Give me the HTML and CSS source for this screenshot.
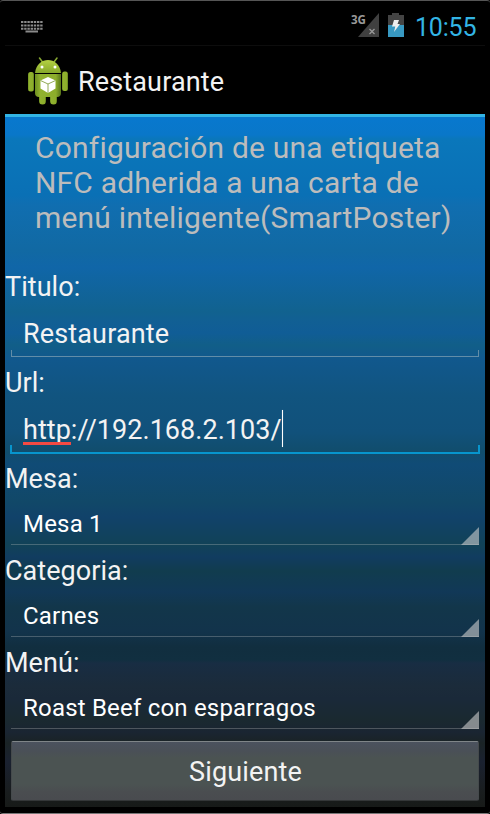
FILE: index.html
```html
<!DOCTYPE html>
<html lang="es">
<head>
<meta charset="utf-8">
<title>Restaurante</title>
<link rel="stylesheet" href="styles.css">
</head>
<body>
<div class="device">
  <header class="status">
    <svg class="keyboard" width="22" height="12" viewBox="0 0 22 12" fill="none" stroke="#8a8a8a" stroke-width="2">
      <path d="M0 1H22M0 4.5H22M0 7.8H22" stroke-dasharray="2.4 .8"/>
      <path d="M4.5 10.5H17"/>
    </svg>
    <svg class="signal" width="28" height="27" viewBox="0 0 28 27">
      <path d="M28 2V26H7Z" fill="#404040"/>
      <path d="M18.5 18L23.5 23M23.5 18L18.5 23" stroke="#999" stroke-width="1.3"/>
      <text class="network" x="0" y="13" textLength="15" lengthAdjust="spacingAndGlyphs">3G</text>
    </svg>
    <svg class="battery" width="16" height="24" viewBox="0 0 16 24">
      <path d="M0 2H4V0H11V2H16V12H0Z" fill="#444"/>
      <path d="M0 12H16V24H0Z" fill="#3899c2"/>
      <path d="M6 7H11L9.5 11H12L6 19L7.3 13.4H4Z" fill="#eee"/>
    </svg>
    <span class="clock">10:55</span>
  </header>
  <div class="actionbar">
    <svg class="robot" width="40" height="48" viewBox="0 0 40 48">
      <defs>
        <linearGradient id="body" x1="0" x2="1" y1="0" y2="0">
          <stop offset="0" stop-color="#6d8e20"/><stop offset=".2" stop-color="#91b22f"/><stop offset=".8" stop-color="#8cad2b"/><stop offset="1" stop-color="#58751a"/>
        </linearGradient>
        <linearGradient id="head" x1="0" x2="0" y1="0" y2="1">
          <stop offset="0" stop-color="#b5d143"/><stop offset="1" stop-color="#86a82a"/>
        </linearGradient>
      </defs>
      <path d="M11.5 1L14.5 5M29 1L26 5" stroke="#87a832" stroke-width="1.5" stroke-linecap="round"/>
      <path d="M7 16C8 7 14 3 20 3S32 7 33 16Z" fill="url(#head)"/>
      <circle cx="14" cy="10" r="1.5" fill="#fff"/><circle cx="27" cy="10" r="1.5" fill="#fff"/>
      <rect x="11" y="34" width="7" height="13.5" rx="3.5" fill="url(#body)"/>
      <rect x="22" y="34" width="7" height="13.5" rx="3.5" fill="url(#body)"/>
      <rect x="0" y="15" width="6" height="19.5" rx="2.5" fill="url(#body)"/>
      <rect x="34" y="14.5" width="6" height="19.5" rx="2.5" fill="url(#body)"/>
      <path d="M7 17H33V36Q33 40 29 40H11Q7 40 7 36Z" fill="url(#body)"/>
      <path d="M20 20L27.5 23.5V31.5L20 36L12.5 31.5V23.5Z" fill="#fff"/>
      <path d="M12.5 23.5L20 27L27.5 23.5M20 27V36" fill="none" stroke="#91aa56" stroke-width="1"/>
    </svg>
    <h1 class="title">Restaurante</h1>
  </div>
  <main class="content">
    <p class="intro"><span class="line">Configuración de una etiqueta</span><span class="line">NFC adherida a una carta de</span><span class="line">menú inteligente(SmartPoster)</span></p>
    <div class="label">Titulo:</div>
    <div class="edit"><span class="value">Restaurante</span></div>
    <div class="label">Url:</div>
    <div class="edit focused"><span class="value url"><span class="misspelled">http</span>://192.168.2.103/</span><span class="caret"></span></div>
    <div class="label">Mesa:</div>
    <div class="spinner"><span>Mesa 1</span></div>
    <div class="label">Categoria:</div>
    <div class="spinner"><span>Carnes</span></div>
    <div class="label">Menú:</div>
    <div class="spinner"><span>Roast Beef con esparragos</span></div>
    <button class="next">Siguiente</button>
  </main>
</div>
</body>
</html>
```
FILE: styles.css
```css
* { box-sizing: border-box; }
body { margin: 0; background: #000; font-family: Roboto, sans-serif; color: #f3f3f3; }
.device { height: 814px; padding: 0 5px; border-top: 1px solid #555; border-bottom: 1px solid #777; border-radius: 3px; overflow: hidden; }
.status { height: 45px; display: flex; align-items: flex-start; border-bottom: 1px solid #0d0d0d; }
.keyboard { margin: 20px 0 0 16px; }
.signal { margin: 10px 0 0 auto; }
.network { font: bold 13px "Open Sans", sans-serif; fill: #999; }
.battery { margin: 12px 0 0 9px; }
.clock { width: 61px; margin: 11px 9px 0 11px; font-size: 25px; line-height: 31px; letter-spacing: -.2px; color: #33b5e5; white-space: nowrap; }
.actionbar { height: 71px; display: flex; align-items: flex-start; border-bottom: 3px solid #33b5e5; }
.robot { margin: 11px 0 0 23px; }
.title { margin: 20px 0 0 10px; font-size: 27px; line-height: 32px; font-weight: 400; letter-spacing: .14px; }
.content {
  height: 690px;
  background: linear-gradient(#0878ce 0, #0977c9 18px, #0a77bb 22px, #0a70b5 78px, #106eb0 88px, #1169a3 133px, #1066a8 150px, #11628f 195px, #115f94 205px, #105d96 216px, #115e88 228px, #11588d 242px, #11547f 280px, #11517b 315px, #114d6c 335px, #104b76 347px, #114868 385px, #11426a 400px, #114257 428px, #113c60 440px, #113c4e 454px, #113857 475px, #12364a 490px, #12334b 515px, #112e3f 530px, #112f40 543px, #182d43 546px, #1b2b3a 570px, #1a2939 582px, #1a2930 603px, #1a2532 615px, #1a2325 626px, #1a2130 645px, #191d1e 675px, #171a18 690px);
}
.intro { height: 154px; margin: 0; padding: 13px 0 0 30px; font-size: 30px; line-height: 35px; color: #bcbcbc; white-space: nowrap; }
.line { display: block; letter-spacing: .19px; }
.label { height: 32px; font-size: 27px; line-height: 32px; letter-spacing: .05px; }
.edit { position: relative; height: 64px; padding: 15px 0 0 18px; display: flex; align-items: flex-start; font-size: 27px; line-height: 32px; }
.edit::after { content: ""; position: absolute; left: 6px; right: 6px; bottom: 10px; height: 6px; border: 1px solid #628da8; border-top: 0; }
.focused::after { left: 5px; right: 5px; bottom: 9px; height: 7px; border: 2px solid #0795cd; border-top: 0; }
.value { letter-spacing: .14px; }
.url { letter-spacing: .04px; }
.misspelled { position: relative; }
.misspelled::before { content: ""; position: absolute; left: 0; right: 0; top: 28px; height: 3px; background: #f44a43; }
.caret { width: 1px; height: 37px; margin-top: -4px; background: #fff; box-shadow: 0 0 1px #fff8; }
.spinner { position: relative; height: 60px; padding: 14px 0 0 18px; font-size: 24px; line-height: 30px; color: #fff; letter-spacing: .2px; }
.spinner::before { content: ""; position: absolute; left: 6px; right: 6px; bottom: 10px; height: 1px; background: rgba(200, 200, 200, .3); }
.spinner::after { content: ""; position: absolute; right: 6px; bottom: 10px; width: 18px; height: 18px; background: rgba(205, 205, 205, .6); clip-path: polygon(100% 0, 100% 100%, 0 100%); }
.next { display: block; width: 468px; height: 60px; margin: 2px 6px 0; padding: 2px 0 0 1px; border: 1px solid #454a4c; border-top-color: #7f8588; border-bottom-color: #343738; border-radius: 2px; background: linear-gradient(#4b525e 0, #4a5057 9px, #4b5352 16px, #4b5352 42px, #4a4d50 50px, #494b4f 100%); color: #f3f3f3; font: 27px/32px Roboto, sans-serif; letter-spacing: .15px; }
```
